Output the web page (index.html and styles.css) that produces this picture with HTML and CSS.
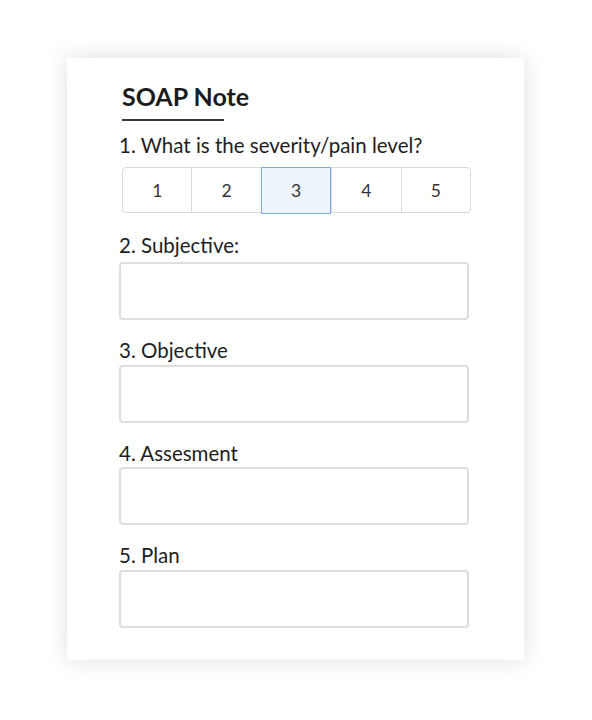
FILE: index.html
```html
<!DOCTYPE html>
<html>
<head>
<meta charset="utf-8">
<link rel="stylesheet" href="styles.css">
</head>
<body>
<div class="card">
  <h1 class="title">SOAP Note</h1>
  <div class="rule"></div>
  <div class="question">1. What is the severity/pain level?</div>
  <div class="rating">
    <div class="seg">1</div>
    <div class="seg">2</div>
    <div class="seg selected">3</div>
    <div class="seg">4</div>
    <div class="seg">5</div>
  </div>
  <div class="field first">
    <div class="label">2. Subjective:</div>
    <div class="box"></div>
  </div>
  <div class="field">
    <div class="label">3. Objective</div>
    <div class="box"></div>
  </div>
  <div class="field">
    <div class="label">4. Assesment</div>
    <div class="box"></div>
  </div>
  <div class="field">
    <div class="label">5. Plan</div>
    <div class="box"></div>
  </div>
</div>
</body>
</html>
```
FILE: styles.css
```css
html, body {
  margin: 0;
  padding: 0;
  background: #ffffff;
}
body {
  font-family: Lato, "Liberation Sans", sans-serif;
  color: #1e1e1e;
  padding-bottom: 40px;
}
.card {
  margin: 58px 0 0 67px;
  width: 457px;
  height: 602px;
  box-sizing: border-box;
  padding: 24px 0 0 52px;
  background: #ffffff;
  box-shadow: 0 0 22px rgba(0, 0, 0, 0.13);
  display: flex;
  flex-direction: column;
}
.title {
  margin: 0 0 0 3px;
  font-size: 25px;
  line-height: 28px;
  font-weight: 700;
  color: #1c1c1c;
}
.rule {
  margin: 9px 0 0 3px;
  width: 102px;
  height: 2px;
  background: #3a3a3a;
}
.question {
  margin-top: 12px;
  font-size: 20.5px;
  line-height: 24px;
}
.rating {
  margin: 10px 0 0 3px;
  width: 349px;
  height: 46px;
  box-sizing: border-box;
  display: flex;
  border: 1.5px solid #d9d9d9;
  border-radius: 4px;
}
.seg {
  flex: 1;
  display: flex;
  align-items: center;
  justify-content: center;
  font-size: 17.5px;
  color: #333333;
  border-left: 1.5px solid #d9d9d9;
}
.seg:first-child {
  border-left: none;
}
.seg.selected {
  background: #eef4fc;
  border: 1.5px solid #7eaaf0;
  margin: -1.5px 0;
}
.field {
  margin-top: 18px;
}
.field.first {
  margin-top: 20px;
}
.label {
  font-size: 20.5px;
  line-height: 24px;
  margin-bottom: 2.5px;
}
.field.first .label {
  margin-bottom: 5px;
}
.box {
  width: 350px;
  height: 58px;
  box-sizing: border-box;
  border: 2px solid #dedede;
  border-radius: 4px;
}
```
